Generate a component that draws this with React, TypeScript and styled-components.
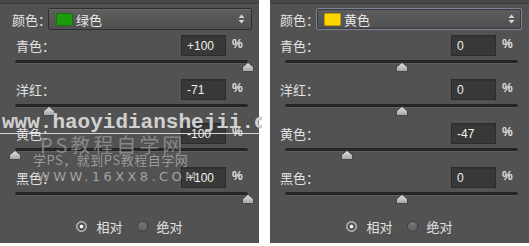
import styled, { createGlobalStyle } from 'styled-components';

const GlobalStyle = createGlobalStyle`
  html, body {
    margin: 0;
    padding: 0;
    background: #ffffff;
  }
  body {
    font-family: "Noto Sans CJK SC", "Noto Sans", sans-serif;
  }
`;

const Page = styled.div`
  position: relative;
  width: 529px;
  height: 246px;
  display: flex;
  justify-content: space-between;
  align-items: flex-start;
  overflow: hidden;
`;

const Panel = styled.div`
  width: 259px;
  height: 243px;
  background: #525252;
  display: flex;
  flex-direction: column;
`;

const TopEdge = styled.div`
  height: 3px;
  background: #474747;
  border-bottom: 1px solid #3c3c3c;
  margin-bottom: 4px;
`;

const ColorRow = styled.div<{ $indent: number }>`
  display: flex;
  align-items: center;
  height: 22px;
  margin-bottom: 5px;
  padding-left: ${(p) => p.$indent}px;
  padding-right: 7px;
`;

const ColorLabel = styled.span`
  width: 36px;
  flex-shrink: 0;
  font-size: 13px;
  color: #e4e4e4;
  white-space: nowrap;
`;

const Select = styled.div<{ $focused?: boolean }>`
  flex: 1;
  height: 22px;
  box-sizing: border-box;
  display: flex;
  align-items: center;
  padding: 0 6px 0 7px;
  border: 1px solid ${(p) => (p.$focused ? '#7d8398' : '#2e2e2e')};
  border-radius: 2px;
  background: linear-gradient(#5e5e5e, #4f4f4f);
  box-shadow: ${(p) =>
    p.$focused ? 'inset 0 0 0 1px #3a3a3a' : 'inset 0 1px 0 #6a6a6a'};
`;

const Swatch = styled.span<{ $color: string }>`
  width: 17px;
  height: 13px;
  border-radius: 2px;
  background: ${(p) => p.$color};
  box-shadow: inset 0 0 0 1px rgba(0, 0, 0, 0.25);
  flex-shrink: 0;
`;

const SelectText = styled.span`
  flex: 1;
  margin-left: 3px;
  font-size: 13px;
  color: #e8e8e8;
`;

const Group = styled.div`
  display: flex;
  flex-direction: column;
`;

const FieldRow = styled.div<{ $indent: number }>`
  display: flex;
  align-items: center;
  height: 21px;
  padding-left: ${(p) => p.$indent}px;
  padding-right: 17px;
`;

const FieldLabel = styled.span`
  flex: 1;
  font-size: 13px;
  color: #e2e2e2;
`;

const ValueBox = styled.div`
  width: 45px;
  height: 21px;
  box-sizing: border-box;
  display: flex;
  align-items: center;
  padding-left: 5px;
  background: #383838;
  border: 1px solid #2c2c2c;
  box-shadow: inset 0 1px 0 #303030;
  font-family: "Liberation Sans", Arial, sans-serif;
  font-size: 12px;
  color: #f0f0f0;
`;

const Percent = styled.span`
  width: 16px;
  padding-left: 6px;
  box-sizing: border-box;
  margin-bottom: 3px;
  font-family: "Liberation Sans", Arial, sans-serif;
  font-size: 12px;
  font-weight: bold;
  color: #e2e2e2;
`;

const SliderBlock = styled.div`
  position: relative;
  height: 23px;
  margin: 0 11px 0 15px;
`;

const Track = styled.div`
  margin-top: 4px;
  height: 3px;
  border-radius: 2px;
  background: #252525;
  border-bottom: 1px solid #5e5e5e;
`;

const Thumb = styled.svg`
  position: absolute;
  top: 6px;
  width: 12px;
  height: 10px;
  margin-left: -6px;
`;

const RadioRow = styled.div`
  flex: 1;
  display: flex;
  align-items: center;
  justify-content: center;
  gap: 14px;
  padding-bottom: 1px;
`;

const RadioItem = styled.div`
  display: flex;
  align-items: center;
  gap: 9px;
`;

const RadioDot = styled.span<{ $checked?: boolean }>`
  width: 11px;
  height: 11px;
  box-sizing: border-box;
  border-radius: 50%;
  border: 1px solid ${(p) => (p.$checked ? '#c4c4c4' : '#3e3e3e')};
  background: ${(p) =>
    p.$checked
      ? 'radial-gradient(circle, #ffffff 0 1.6px, #505050 2.2px 3.2px, #8a8a8a 3.8px)'
      : 'linear-gradient(#777777, #616161)'};
`;

const RadioText = styled.span`
  font-size: 13px;
  color: #e0e0e0;
`;

const Watermark = styled.div`
  position: absolute;
  left: 0;
  top: 0;
  width: 262px;
  height: 246px;
  overflow: hidden;
  pointer-events: none;
`;

const SiteMark = styled.div`
  position: absolute;
  left: 2px;
  top: 111px;
  font-family: "Liberation Mono", "Courier New", monospace;
  font-weight: bold;
  font-size: 21px;
  white-space: nowrap;
  color: rgba(226, 226, 226, 0.9);
  text-shadow: 0 0 1px #555;
`;

const MarkRule = styled.div`
  position: absolute;
  left: 0;
  top: 133px;
  width: 262px;
  height: 1px;
  background: rgba(240, 240, 240, 0.85);
`;

const BigMark = styled.div`
  position: absolute;
  left: 40px;
  top: 130px;
  font-size: 20px;
  letter-spacing: 3px;
  white-space: nowrap;
  color: rgba(150, 150, 150, 0.8);
`;

const SloganMark = styled.div`
  position: absolute;
  left: 33px;
  top: 150px;
  font-size: 13px;
  letter-spacing: 0.5px;
  white-space: nowrap;
  color: rgba(175, 175, 175, 0.8);
`;

const UrlMark = styled.div`
  position: absolute;
  left: 37px;
  top: 169px;
  font-family: "DejaVu Sans", sans-serif;
  font-size: 13px;
  letter-spacing: 3.4px;
  white-space: nowrap;
  color: rgba(180, 180, 180, 0.85);
`;

type Channel = { name: string; value: number };

type PanelData = {
  colorName: string;
  swatch: string;
  focused?: boolean;
  colorIndent: number;
  rowIndent: number;
  channels: Channel[];
};

const panels: PanelData[] = [
  {
    colorName: '绿色',
    swatch: '#1a9c0c',
    colorIndent: 12,
    rowIndent: 16,
    channels: [
      { name: '青色：', value: 100 },
      { name: '洋红：', value: -71 },
      { name: '黄色：', value: -100 },
      { name: '黑色：', value: 100 },
    ],
  },
  {
    colorName: '黄色',
    swatch: '#ffd500',
    focused: true,
    colorIndent: 10,
    rowIndent: 10,
    channels: [
      { name: '青色：', value: 0 },
      { name: '洋红：', value: 0 },
      { name: '黄色：', value: -47 },
      { name: '黑色：', value: 0 },
    ],
  },
];

const formatValue = (v: number) => (v > 0 ? `+${v}` : `${v}`);

const ArrowsIcon = () => (
  <svg width="7" height="10" viewBox="0 0 7 10">
    <path d="M3.5 0.5 L6.5 4 L0.5 4 Z" fill="#d4d4d4" />
    <path d="M3.5 9.5 L6.5 6 L0.5 6 Z" fill="#d4d4d4" />
  </svg>
);

const ThumbIcon = ({ left }: { left: number }) => (
  <Thumb viewBox="0 0 12 10" style={{ left: `${left}%` }}>
    <defs>
      <linearGradient id="thumbFill" x1="0" y1="0" x2="0" y2="1">
        <stop offset="0" stopColor="#e2e2e2" />
        <stop offset="1" stopColor="#a4a4a4" />
      </linearGradient>
    </defs>
    <path
      d="M6 0.5 L11.5 5 L11.5 9.5 L0.5 9.5 L0.5 5 Z"
      fill="url(#thumbFill)"
      stroke="#3a3a3a"
      strokeWidth="0.8"
    />
  </Thumb>
);

const SelectiveColorPanel = ({ data }: { data: PanelData }) => (
  <Panel>
    <TopEdge />
    <ColorRow $indent={data.colorIndent}>
      <ColorLabel>颜色：</ColorLabel>
      <Select $focused={data.focused}>
        <Swatch $color={data.swatch} />
        <SelectText>{data.colorName}</SelectText>
        <ArrowsIcon />
      </Select>
    </ColorRow>
    {data.channels.map((c) => (
      <Group key={c.name}>
        <FieldRow $indent={data.rowIndent}>
          <FieldLabel>{c.name}</FieldLabel>
          <ValueBox>{formatValue(c.value)}</ValueBox>
          <Percent>%</Percent>
        </FieldRow>
        <SliderBlock>
          <Track />
          <ThumbIcon left={((c.value + 100) / 200) * 100} />
        </SliderBlock>
      </Group>
    ))}
    <RadioRow>
      <RadioItem>
        <RadioDot $checked />
        <RadioText>相对</RadioText>
      </RadioItem>
      <RadioItem>
        <RadioDot />
        <RadioText>绝对</RadioText>
      </RadioItem>
    </RadioRow>
  </Panel>
);

export default function App() {
  return (
    <>
      <GlobalStyle />
      <Page>
        {panels.map((p) => (
          <SelectiveColorPanel key={p.colorName} data={p} />
        ))}
        <Watermark>
          <SiteMark>www.haoyidianshejii.com</SiteMark>
          <MarkRule />
          <BigMark>PS教程自学网</BigMark>
          <SloganMark>学PS，就到PS教程自学网</SloganMark>
          <UrlMark>WWW.16XX8.COM</UrlMark>
        </Watermark>
      </Page>
    </>
  );
}
